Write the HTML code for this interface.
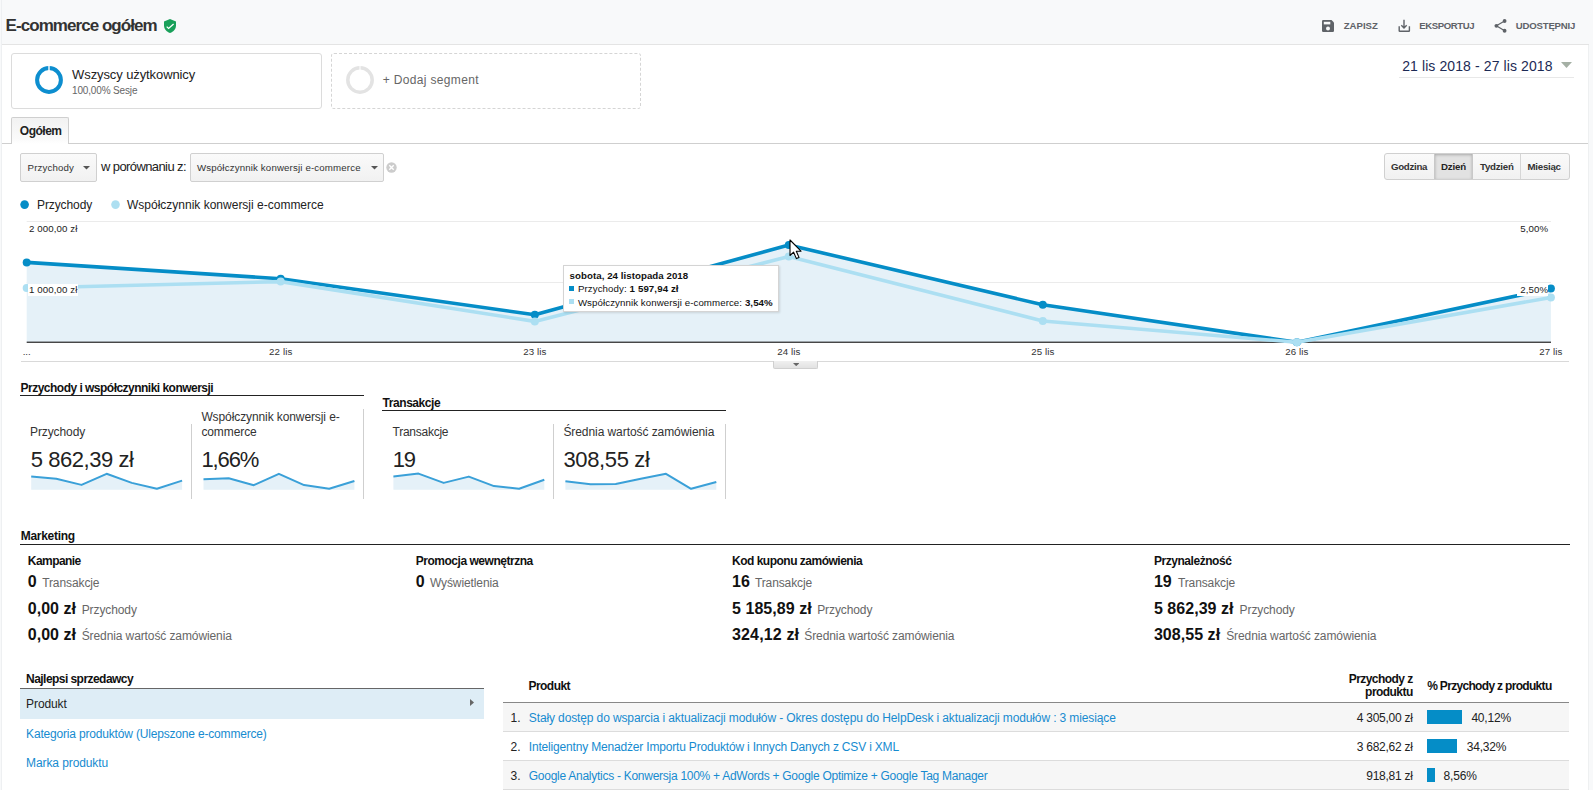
<!DOCTYPE html>
<html><head><meta charset="utf-8"><style>
html,body{margin:0;padding:0;}
body{width:1593px;height:790px;overflow:hidden;position:relative;background:#f8f9fa;font-family:"Liberation Sans",sans-serif;color:#222;}
.t{position:absolute;white-space:nowrap;line-height:1;}
.a{position:absolute;box-sizing:border-box;}
a{color:inherit;text-decoration:none;}
</style></head><body>
<div class="a" style="left:2px;top:44px;width:1586px;height:746px;background:#fff;"></div>
<div class="a" style="left:2px;top:44px;width:1587px;height:1px;background:#e4e4e4;"></div>
<div class="a" style="left:1588px;top:45px;width:1px;height:745px;background:#eef0f1;"></div>
<div class="a" style="left:1px;top:0;width:1px;height:790px;background:#eef0f2;"></div>
<div class="t" style="top:17.21px;font-size:17px;color:#333;font-weight:700;letter-spacing:-0.95px;left:5.60px;">E-commerce ogółem</div>
<svg class="a" style="left:164px;top:19px" width="12" height="14" viewBox="0 0 12 14"><path d="M6 0 L12 2.6 V6.6 C12 10 9.6 12.8 6 14 C2.4 12.8 0 10 0 6.6 V2.6 Z" fill="#19a05a"/><path d="M2.7 7.6 L4.6 9.4 L9.6 4.9" stroke="#fff" stroke-width="1.3" fill="none"/></svg>
<svg class="a" style="left:1322px;top:20px" width="12" height="12" viewBox="0 0 12 12"><path d="M0 1.2 Q0 0 1.2 0 H9.5 L12 2.5 V10.8 Q12 12 10.8 12 H1.2 Q0 12 0 10.8 Z" fill="#5f6368"/><rect x="1.8" y="1.8" width="6.5" height="2.6" fill="#f8f9fa"/><circle cx="6" cy="8.5" r="2" fill="#f8f9fa"/></svg>
<div class="t" style="top:20.97px;font-size:9.6px;color:#5f6368;font-weight:700;letter-spacing:0px;left:1343.70px;">ZAPISZ</div>
<svg class="a" style="left:1397px;top:19px" width="14" height="14" viewBox="0 0 14 14"><path d="M7 0.8 V9 M4.3 6.3 L7 9 L9.7 6.3" stroke="#5f6368" stroke-width="1.4" fill="none"/><path d="M2.2 7.2 V11.7 Q2.2 12.3 2.8 12.3 H11.8 Q12.4 12.3 12.4 11.7 V7.2" stroke="#5f6368" stroke-width="1.4" fill="none"/></svg>
<div class="t" style="top:20.97px;font-size:9.6px;color:#5f6368;font-weight:700;letter-spacing:-0.4px;left:1419.20px;">EKSPORTUJ</div>
<svg class="a" style="left:1494px;top:18px" width="13" height="15" viewBox="0 0 13 15"><circle cx="10.6" cy="3" r="1.9" fill="#5f6368"/><circle cx="2.4" cy="7.8" r="1.9" fill="#5f6368"/><circle cx="10.6" cy="12.75" r="1.9" fill="#5f6368"/><path d="M10.6 3 L2.4 7.8 L10.6 12.75" stroke="#5f6368" stroke-width="1.2" fill="none"/></svg>
<div class="t" style="top:20.97px;font-size:9.6px;color:#5f6368;font-weight:700;letter-spacing:-0.2px;left:1515.80px;">UDOSTĘPNIJ</div>
<div class="a" style="left:11px;top:53px;width:311px;height:56px;border:1px solid #dcdcdc;border-radius:3px;"></div>
<svg class="a" style="left:34.5px;top:65.7px" width="28" height="28" viewBox="0 0 28 28"><circle cx="14" cy="14" r="11.9" stroke="#0d8ecf" stroke-width="4" fill="none"/><rect x="13.3" y="0" width="1.4" height="5" fill="#fff"/></svg>
<div class="t" style="top:68.00px;font-size:13px;color:#222;letter-spacing:-0.1px;left:72.10px;">Wszyscy użytkownicy</div>
<div class="t" style="top:85.53px;font-size:10px;color:#666;letter-spacing:-0.15px;left:72.00px;">100,00% Sesje</div>
<div class="a" style="left:331px;top:53px;width:310px;height:56px;border:1px dashed #d5d5d5;border-radius:3px;"></div>
<svg class="a" style="left:346px;top:66px" width="28" height="28" viewBox="0 0 28 28"><circle cx="14" cy="14" r="12.2" stroke="#e3e3e3" stroke-width="3.5" fill="none"/><rect x="13.5" y="0" width="1" height="5" fill="#fff"/></svg>
<div class="t" style="top:73.54px;font-size:12px;color:#666;letter-spacing:0.33px;left:382.80px;">+ Dodaj segment</div>
<div class="t" style="top:58.75px;font-size:14px;color:#1c2a55;letter-spacing:0.1px;left:1402.20px;">21 lis 2018 - 27 lis 2018</div>
<svg class="a" style="left:1561px;top:62px" width="11" height="6" viewBox="0 0 11 6"><path d="M0 0 H11 L5.5 6 Z" fill="#a5b0a5"/></svg>
<div class="a" style="left:1399px;top:76.5px;width:175px;height:1px;background:#e8e8e8;"></div>
<div class="a" style="left:2px;top:143px;width:1586px;height:1px;background:#cfcfcf;"></div>
<div class="a" style="left:11px;top:117px;width:58px;height:27px;border:1px solid #cfcfcf;border-bottom:none;border-radius:2px 2px 0 0;background:linear-gradient(#f2f2f2,#fafafa 80%,#fff);"></div>
<div class="t" style="top:125.04px;font-size:12px;color:#222;font-weight:700;letter-spacing:-0.5px;left:19.80px;">Ogółem</div>
<div class="a" style="left:20px;top:153px;width:77px;height:29px;border:1px solid #d0d0d0;border-radius:2px;background:linear-gradient(#fafafa,#f1f1f1);"></div>
<div class="t" style="top:163.39px;font-size:9.7px;color:#333;letter-spacing:0.12px;left:27.60px;">Przychody</div>
<svg class="a" style="left:83px;top:166px" width="7" height="3.5" viewBox="0 0 7 3.5"><path d="M0 0 H7 L3.5 3.5 Z" fill="#555"/></svg>
<div class="t" style="top:160.00px;font-size:13px;color:#222;letter-spacing:-0.6px;left:101.00px;">w porównaniu z:</div>
<div class="a" style="left:190px;top:153px;width:194px;height:29px;border:1px solid #d0d0d0;border-radius:2px;background:linear-gradient(#fafafa,#f1f1f1);"></div>
<div class="t" style="top:163.39px;font-size:9.7px;color:#333;letter-spacing:0.15px;left:197.00px;">Współczynnik konwersji e-commerce</div>
<svg class="a" style="left:370.5px;top:166px" width="7" height="3.5" viewBox="0 0 7 3.5"><path d="M0 0 H7 L3.5 3.5 Z" fill="#555"/></svg>
<svg class="a" style="left:386px;top:162px" width="11" height="11" viewBox="0 0 11 11"><circle cx="5.5" cy="5.5" r="5.2" fill="#ccc"/><path d="M3.3 3.3 L7.7 7.7 M7.7 3.3 L3.3 7.7" stroke="#fff" stroke-width="1.4"/></svg>
<div class="a" style="left:1384px;top:153px;width:186px;height:27px;border:1px solid #d0d0d0;border-radius:2px;background:linear-gradient(#fafafa,#f1f1f1);border-radius:3px;"></div>
<div class="a" style="left:1434px;top:154px;width:39px;height:25px;background:#e2e2e2;box-shadow:inset 0 1px 3px rgba(0,0,0,.25);border-left:1px solid #c8c8c8;border-right:1px solid #c8c8c8;"></div>
<div class="a" style="left:1520px;top:154px;width:1px;height:25px;background:#d6d6d6;"></div>
<div class="t" style="top:162.39px;font-size:9.7px;color:#333;font-weight:700;letter-spacing:-0.3px;left:1391.00px;">Godzina</div>
<div class="t" style="top:162.39px;font-size:9.7px;color:#222;font-weight:700;letter-spacing:-0.15px;left:1441.00px;">Dzień</div>
<div class="t" style="top:162.39px;font-size:9.7px;color:#333;font-weight:700;letter-spacing:-0.25px;left:1480.00px;">Tydzień</div>
<div class="t" style="top:162.39px;font-size:9.7px;color:#333;font-weight:700;letter-spacing:-0.25px;left:1527.50px;">Miesiąc</div>
<svg class="a" style="left:20px;top:200px" width="310" height="10"><circle cx="4.6" cy="4.6" r="4.3" fill="#058dc7"/><circle cx="95.5" cy="4.6" r="4.3" fill="#addff1"/></svg>
<div class="t" style="top:198.64px;font-size:12px;color:#222;letter-spacing:-0.1px;left:37.00px;">Przychody</div>
<div class="t" style="top:198.64px;font-size:12px;color:#222;letter-spacing:0px;left:127.00px;">Współczynnik konwersji e-commerce</div>
<svg class="a" style="left:0;top:0" width="1593" height="790" viewBox="0 0 1593 790"><rect x="26.7" y="221" width="1524.3" height="1" fill="#ebebeb"/><rect x="26.7" y="282" width="1524.3" height="1" fill="#ebebeb"/><polygon points="26.7,342.3 26.7,262.4 280.7,278.7 534.8,314.8 788.8,245.0 1042.8,304.8 1296.9,342.3 1550.9,288.6 1550.9,342.3" fill="#e5f1f8"/><rect x="26.7" y="341.6" width="1524.3" height="1.3" fill="#333"/><rect x="21" y="361" width="1548" height="1" fill="#d9d9d9"/><polyline points="26.7,262.4 280.7,278.7 534.8,314.8 788.8,245.0 1042.8,304.8 1296.9,342.3 1550.9,288.6" fill="none" stroke="#058dc7" stroke-width="3.6" stroke-linejoin="round"/><circle cx="26.7" cy="262.4" r="4" fill="#058dc7"/><circle cx="280.7" cy="278.7" r="4" fill="#058dc7"/><circle cx="534.8" cy="314.8" r="4" fill="#058dc7"/><circle cx="788.8" cy="245.0" r="4" fill="#058dc7"/><circle cx="1042.8" cy="304.8" r="4" fill="#058dc7"/><circle cx="1296.9" cy="342.3" r="4" fill="#058dc7"/><circle cx="1550.9" cy="288.6" r="4" fill="#058dc7"/><polyline points="26.7,288.0 280.7,281.6 534.8,321.4 788.8,256.6 1042.8,321.0 1296.9,342.3 1550.9,297.5" fill="none" stroke="#acdff2" stroke-width="3.6" stroke-linejoin="round"/><circle cx="26.7" cy="288.0" r="4" fill="#acdff2"/><circle cx="280.7" cy="281.6" r="4" fill="#acdff2"/><circle cx="534.8" cy="321.4" r="4" fill="#acdff2"/><circle cx="788.8" cy="256.6" r="4" fill="#acdff2"/><circle cx="1042.8" cy="321.0" r="4" fill="#acdff2"/><circle cx="1296.9" cy="342.3" r="4" fill="#acdff2"/><circle cx="1550.9" cy="297.5" r="4" fill="#acdff2"/></svg>
<div class="t" style="top:224.09px;font-size:9.7px;color:#222;letter-spacing:0.1px;left:29.00px;">2 000,00 zł</div>
<div class="a" style="left:28px;top:283.5px;width:50px;height:12px;background:#fff;"></div>
<div class="t" style="top:284.99px;font-size:9.7px;color:#222;letter-spacing:0.1px;left:29.00px;">1 000,00 zł</div>
<div class="t" style="top:224.09px;font-size:9.7px;color:#222;letter-spacing:0.1px;right:44.80px;">5,00%</div>
<div class="a" style="left:1517px;top:283.5px;width:31px;height:12px;background:#fff;"></div>
<div class="t" style="top:284.99px;font-size:9.7px;color:#222;letter-spacing:0.1px;right:44.80px;">2,50%</div>
<div class="t" style="top:347.09px;font-size:9.7px;color:#333;left:26.70px;transform:translateX(-50%);">...</div>
<div class="t" style="top:347.09px;font-size:9.7px;color:#333;letter-spacing:0.1px;left:280.73px;transform:translateX(-50%);">22 lis</div>
<div class="t" style="top:347.09px;font-size:9.7px;color:#333;letter-spacing:0.1px;left:534.77px;transform:translateX(-50%);">23 lis</div>
<div class="t" style="top:347.09px;font-size:9.7px;color:#333;letter-spacing:0.1px;left:788.80px;transform:translateX(-50%);">24 lis</div>
<div class="t" style="top:347.09px;font-size:9.7px;color:#333;letter-spacing:0.1px;left:1042.83px;transform:translateX(-50%);">25 lis</div>
<div class="t" style="top:347.09px;font-size:9.7px;color:#333;letter-spacing:0.1px;left:1296.87px;transform:translateX(-50%);">26 lis</div>
<div class="t" style="top:347.09px;font-size:9.7px;color:#333;letter-spacing:0.1px;left:1550.90px;transform:translateX(-50%);">27 lis</div>
<div class="a" style="left:773px;top:361px;width:45px;height:8px;background:linear-gradient(#f0f0f0,#e2e2e2);border:1px solid #d0d0d0;border-top:none;border-radius:0 0 2px 2px;"></div>
<svg class="a" style="left:792.8px;top:362.8px" width="6.4" height="3.2" viewBox="0 0 6.4 3.2"><path d="M0 0 H6.4 L3.2 3.2 Z" fill="#666"/></svg>
<div class="a" style="left:563.3px;top:264.8px;width:216px;height:47.6px;background:#fff;border:1px solid #d4d4d4;box-shadow:1px 1px 2px rgba(0,0,0,.12);"></div>
<div class="t" style="top:271.09px;font-size:9.7px;color:#111;font-weight:700;letter-spacing:0.05px;left:569.60px;">sobota, 24 listopada 2018</div>
<div class="a" style="left:569px;top:286.3px;width:4.6px;height:4.5px;background:#058dc7;"></div>
<div class="t" style="top:284.19px;font-size:9.7px;color:#111;letter-spacing:0.1px;left:577.90px;">Przychody: <b>1 597,94 zł</b></div>
<div class="a" style="left:569px;top:299.3px;width:4.6px;height:4.6px;background:#acdff2;"></div>
<div class="t" style="top:297.89px;font-size:9.7px;color:#111;letter-spacing:0.08px;left:577.90px;">Współczynnik konwersji e-commerce: <b>3,54%</b></div>
<svg class="a" style="left:789px;top:239px" width="14" height="21" viewBox="0 0 14 21"><path d="M1 1 V16.5 L4.6 13.2 L7.4 19.6 L10 18.4 L7.3 12.2 H12 Z" fill="#fff" stroke="#000" stroke-width="1.1" stroke-linejoin="round"/></svg>
<div class="t" style="top:381.84px;font-size:12px;color:#111;font-weight:700;letter-spacing:-0.52px;left:20.60px;">Przychody i współczynniki konwersji</div>
<div class="a" style="left:20px;top:394.5px;width:344px;height:1px;background:#222;"></div>
<div class="t" style="top:397.04px;font-size:12px;color:#111;font-weight:700;letter-spacing:-0.45px;left:382.60px;">Transakcje</div>
<div class="a" style="left:382px;top:410px;width:344px;height:1px;background:#222;"></div>
<div class="a" style="left:190.9px;top:424px;width:1px;height:74.8px;background:#cfcfcf;"></div>
<div class="a" style="left:362.8px;top:409px;width:1px;height:89.8px;background:#cfcfcf;"></div>
<div class="a" style="left:553.1px;top:424px;width:1px;height:74.8px;background:#cfcfcf;"></div>
<div class="a" style="left:724.9px;top:424px;width:1px;height:74.8px;background:#cfcfcf;"></div>
<div class="t" style="top:425.84px;font-size:12px;color:#333;letter-spacing:-0.1px;left:30.00px;">Przychody</div>
<div class="t" style="top:411.34px;font-size:12px;color:#333;letter-spacing:-0.1px;left:201.40px;">Współczynnik konwersji e-</div>
<div class="t" style="top:425.84px;font-size:12px;color:#333;letter-spacing:-0.1px;left:201.40px;">commerce</div>
<div class="t" style="top:425.84px;font-size:12px;color:#333;letter-spacing:-0.25px;left:392.50px;">Transakcje</div>
<div class="t" style="top:425.84px;font-size:12px;color:#333;letter-spacing:-0.07px;left:563.40px;">Średnia wartość zamówienia</div>
<div class="t" style="top:448.58px;font-size:22px;color:#222;letter-spacing:-0.45px;left:30.80px;">5 862,39 zł</div>
<div class="t" style="top:448.58px;font-size:22px;color:#222;letter-spacing:-1.1px;left:201.40px;">1,66%</div>
<div class="t" style="top:448.58px;font-size:22px;color:#222;letter-spacing:-1.2px;left:392.80px;">19</div>
<div class="t" style="top:448.58px;font-size:22px;color:#222;letter-spacing:-0.35px;left:563.40px;">308,55 zł</div>
<svg class="a" style="left:0;top:0" width="800" height="500"><polygon points="31.2,489.8 31.2,476.4 56.3,478.7 81.5,484.9 106.6,473.8 131.8,482.9 156.9,488.8 182.1,480.6 182.1,489.8" fill="#e5f1f8"/><polyline points="31.2,476.4 56.3,478.7 81.5,484.9 106.6,473.8 131.8,482.9 156.9,488.8 182.1,480.6" fill="none" stroke="#3aa0d8" stroke-width="2" stroke-linejoin="round"/><polygon points="203.5,489.8 203.5,479.3 228.7,478.2 253.8,485.2 278.9,473.8 304.1,485.1 329.2,488.8 354.4,481.0 354.4,489.8" fill="#e5f1f8"/><polyline points="203.5,479.3 228.7,478.2 253.8,485.2 278.9,473.8 304.1,485.1 329.2,488.8 354.4,481.0" fill="none" stroke="#3aa0d8" stroke-width="2" stroke-linejoin="round"/><polygon points="393.4,489.8 393.4,476.4 418.5,473.6 443.7,482.9 468.8,476.6 494.0,486.1 519.1,488.8 544.3,479.8 544.3,489.8" fill="#e5f1f8"/><polyline points="393.4,476.4 418.5,473.6 443.7,482.9 468.8,476.6 494.0,486.1 519.1,488.8 544.3,479.8" fill="none" stroke="#3aa0d8" stroke-width="2" stroke-linejoin="round"/><polygon points="565.4,489.8 565.4,481.2 590.5,484.3 615.7,484.0 640.8,478.7 666.0,473.8 691.1,488.8 716.3,482.0 716.3,489.8" fill="#e5f1f8"/><polyline points="565.4,481.2 590.5,484.3 615.7,484.0 640.8,478.7 666.0,473.8 691.1,488.8 716.3,482.0" fill="none" stroke="#3aa0d8" stroke-width="2" stroke-linejoin="round"/></svg>
<div class="t" style="top:529.74px;font-size:12px;color:#111;font-weight:700;letter-spacing:-0.3px;left:20.80px;">Marketing</div>
<div class="a" style="left:20px;top:544px;width:1550px;height:1px;background:#222;"></div>
<div class="t" style="top:554.64px;font-size:12px;color:#111;font-weight:700;letter-spacing:-0.55px;left:27.80px;">Kampanie</div>
<div class="t" style="top:574.16px;font-size:16px;color:#111;font-weight:700;letter-spacing:0px;left:27.80px;">0</div>
<div class="t" style="top:576.54px;font-size:12px;color:#666;letter-spacing:-0.1px;left:42.20px;">Transakcje</div>
<div class="t" style="top:601.16px;font-size:16px;color:#111;font-weight:700;letter-spacing:0px;left:27.80px;">0,00 zł</div>
<div class="t" style="top:603.54px;font-size:12px;color:#666;letter-spacing:-0.1px;left:81.70px;">Przychody</div>
<div class="t" style="top:627.16px;font-size:16px;color:#111;font-weight:700;letter-spacing:0px;left:27.80px;">0,00 zł</div>
<div class="t" style="top:629.54px;font-size:12px;color:#666;letter-spacing:-0.1px;left:81.70px;">Średnia wartość zamówienia</div>
<div class="t" style="top:554.64px;font-size:12px;color:#111;font-weight:700;letter-spacing:-0.47px;left:415.70px;">Promocja wewnętrzna</div>
<div class="t" style="top:574.16px;font-size:16px;color:#111;font-weight:700;letter-spacing:0px;left:415.70px;">0</div>
<div class="t" style="top:576.54px;font-size:12px;color:#666;letter-spacing:-0.1px;left:429.90px;">Wyświetlenia</div>
<div class="t" style="top:554.64px;font-size:12px;color:#111;font-weight:700;letter-spacing:-0.5px;left:732.00px;">Kod kuponu zamówienia</div>
<div class="t" style="top:574.16px;font-size:16px;color:#111;font-weight:700;letter-spacing:0px;left:732.00px;">16</div>
<div class="t" style="top:576.54px;font-size:12px;color:#666;letter-spacing:-0.1px;left:754.90px;">Transakcje</div>
<div class="t" style="top:601.16px;font-size:16px;color:#111;font-weight:700;letter-spacing:0.05px;left:732.00px;">5 185,89 zł</div>
<div class="t" style="top:603.54px;font-size:12px;color:#666;letter-spacing:-0.1px;left:817.20px;">Przychody</div>
<div class="t" style="top:627.16px;font-size:16px;color:#111;font-weight:700;letter-spacing:0.15px;left:732.00px;">324,12 zł</div>
<div class="t" style="top:629.54px;font-size:12px;color:#666;letter-spacing:-0.1px;left:804.30px;">Średnia wartość zamówienia</div>
<div class="t" style="top:554.64px;font-size:12px;color:#111;font-weight:700;letter-spacing:-0.45px;left:1153.90px;">Przynależność</div>
<div class="t" style="top:574.16px;font-size:16px;color:#111;font-weight:700;letter-spacing:0px;left:1153.90px;">19</div>
<div class="t" style="top:576.54px;font-size:12px;color:#666;letter-spacing:-0.1px;left:1177.90px;">Transakcje</div>
<div class="t" style="top:601.16px;font-size:16px;color:#111;font-weight:700;letter-spacing:0.05px;left:1153.90px;">5 862,39 zł</div>
<div class="t" style="top:603.54px;font-size:12px;color:#666;letter-spacing:-0.1px;left:1239.60px;">Przychody</div>
<div class="t" style="top:627.16px;font-size:16px;color:#111;font-weight:700;letter-spacing:0.05px;left:1153.90px;">308,55 zł</div>
<div class="t" style="top:629.54px;font-size:12px;color:#666;letter-spacing:-0.1px;left:1226.20px;">Średnia wartość zamówienia</div>
<div class="t" style="top:672.84px;font-size:12px;color:#111;font-weight:700;letter-spacing:-0.55px;left:26.10px;">Najlepsi sprzedawcy</div>
<div class="a" style="left:20px;top:688px;width:464px;height:1px;background:#666;"></div>
<div class="a" style="left:20px;top:689px;width:464px;height:30px;background:#deedf6;"></div>
<div class="t" style="top:698.04px;font-size:12px;color:#222;letter-spacing:-0.1px;left:26.10px;">Produkt</div>
<svg class="a" style="left:470px;top:699px" width="4" height="7"><path d="M0 0 L4 3.5 L0 7 Z" fill="#666"/></svg>
<div class="t" style="top:727.84px;font-size:12px;color:#168bd0;letter-spacing:-0.18px;left:26.10px;">Kategoria produktów (Ulepszone e-commerce)</div>
<div class="t" style="top:756.84px;font-size:12px;color:#168bd0;letter-spacing:-0.1px;left:26.10px;">Marka produktu</div>
<div class="t" style="top:679.84px;font-size:12px;color:#111;font-weight:700;letter-spacing:-0.55px;left:528.50px;">Produkt</div>
<div class="t" style="top:673.14px;font-size:12px;color:#111;font-weight:700;letter-spacing:-0.55px;right:180.30px;">Przychody z</div>
<div class="t" style="top:686.34px;font-size:12px;color:#111;font-weight:700;letter-spacing:-0.55px;right:180.30px;">produktu</div>
<div class="t" style="top:680.04px;font-size:12px;color:#111;font-weight:700;letter-spacing:-0.68px;left:1427.20px;">% Przychody z produktu</div>
<div class="a" style="left:503px;top:702px;width:1066px;height:1px;background:#888;"></div>
<div class="a" style="left:503px;top:703px;width:1066px;height:28px;background:#f6f6f6;"></div>
<div class="a" style="left:503px;top:731px;width:1066px;height:1px;background:#dcdcdc;"></div>
<div class="a" style="left:503px;top:760px;width:1066px;height:1px;background:#dcdcdc;"></div>
<div class="a" style="left:503px;top:761px;width:1066px;height:28px;background:#f6f6f6;"></div>
<div class="a" style="left:503px;top:789px;width:1066px;height:1px;background:#dcdcdc;"></div>
<div class="t" style="top:711.94px;font-size:12px;color:#222;left:510.50px;">1.</div>
<div class="t" style="top:711.94px;font-size:12px;color:#168bd0;letter-spacing:-0.12px;left:528.80px;">Stały dostęp do wsparcia i aktualizacji modułów - Okres dostępu do HelpDesk i aktualizacji modułów : 3 miesiące</div>
<div class="t" style="top:711.94px;font-size:12px;color:#222;letter-spacing:-0.25px;right:180.30px;">4 305,00 zł</div>
<div class="a" style="left:1427px;top:709.9px;width:35.0px;height:14px;background:#058dc7;"></div>
<div class="t" style="top:711.94px;font-size:12px;color:#222;letter-spacing:-0.2px;left:1471.40px;">40,12%</div>
<div class="t" style="top:740.94px;font-size:12px;color:#222;left:510.50px;">2.</div>
<div class="t" style="top:740.94px;font-size:12px;color:#168bd0;letter-spacing:-0.18px;left:528.80px;">Inteligentny Menadżer Importu Produktów i Innych Danych z CSV i XML</div>
<div class="t" style="top:740.94px;font-size:12px;color:#222;letter-spacing:-0.25px;right:180.30px;">3 682,62 zł</div>
<div class="a" style="left:1427px;top:738.9px;width:29.9px;height:14px;background:#058dc7;"></div>
<div class="t" style="top:740.94px;font-size:12px;color:#222;letter-spacing:-0.2px;left:1466.70px;">34,32%</div>
<div class="t" style="top:769.94px;font-size:12px;color:#222;left:510.50px;">3.</div>
<div class="t" style="top:769.94px;font-size:12px;color:#168bd0;letter-spacing:-0.27px;left:528.80px;">Google Analytics - Konwersja 100% + AdWords + Google Optimize + Google Tag Manager</div>
<div class="t" style="top:769.94px;font-size:12px;color:#222;letter-spacing:-0.25px;right:180.30px;">918,81 zł</div>
<div class="a" style="left:1427px;top:767.9px;width:7.8px;height:14px;background:#058dc7;"></div>
<div class="t" style="top:769.94px;font-size:12px;color:#222;letter-spacing:-0.2px;left:1443.60px;">8,56%</div>
</body></html>
